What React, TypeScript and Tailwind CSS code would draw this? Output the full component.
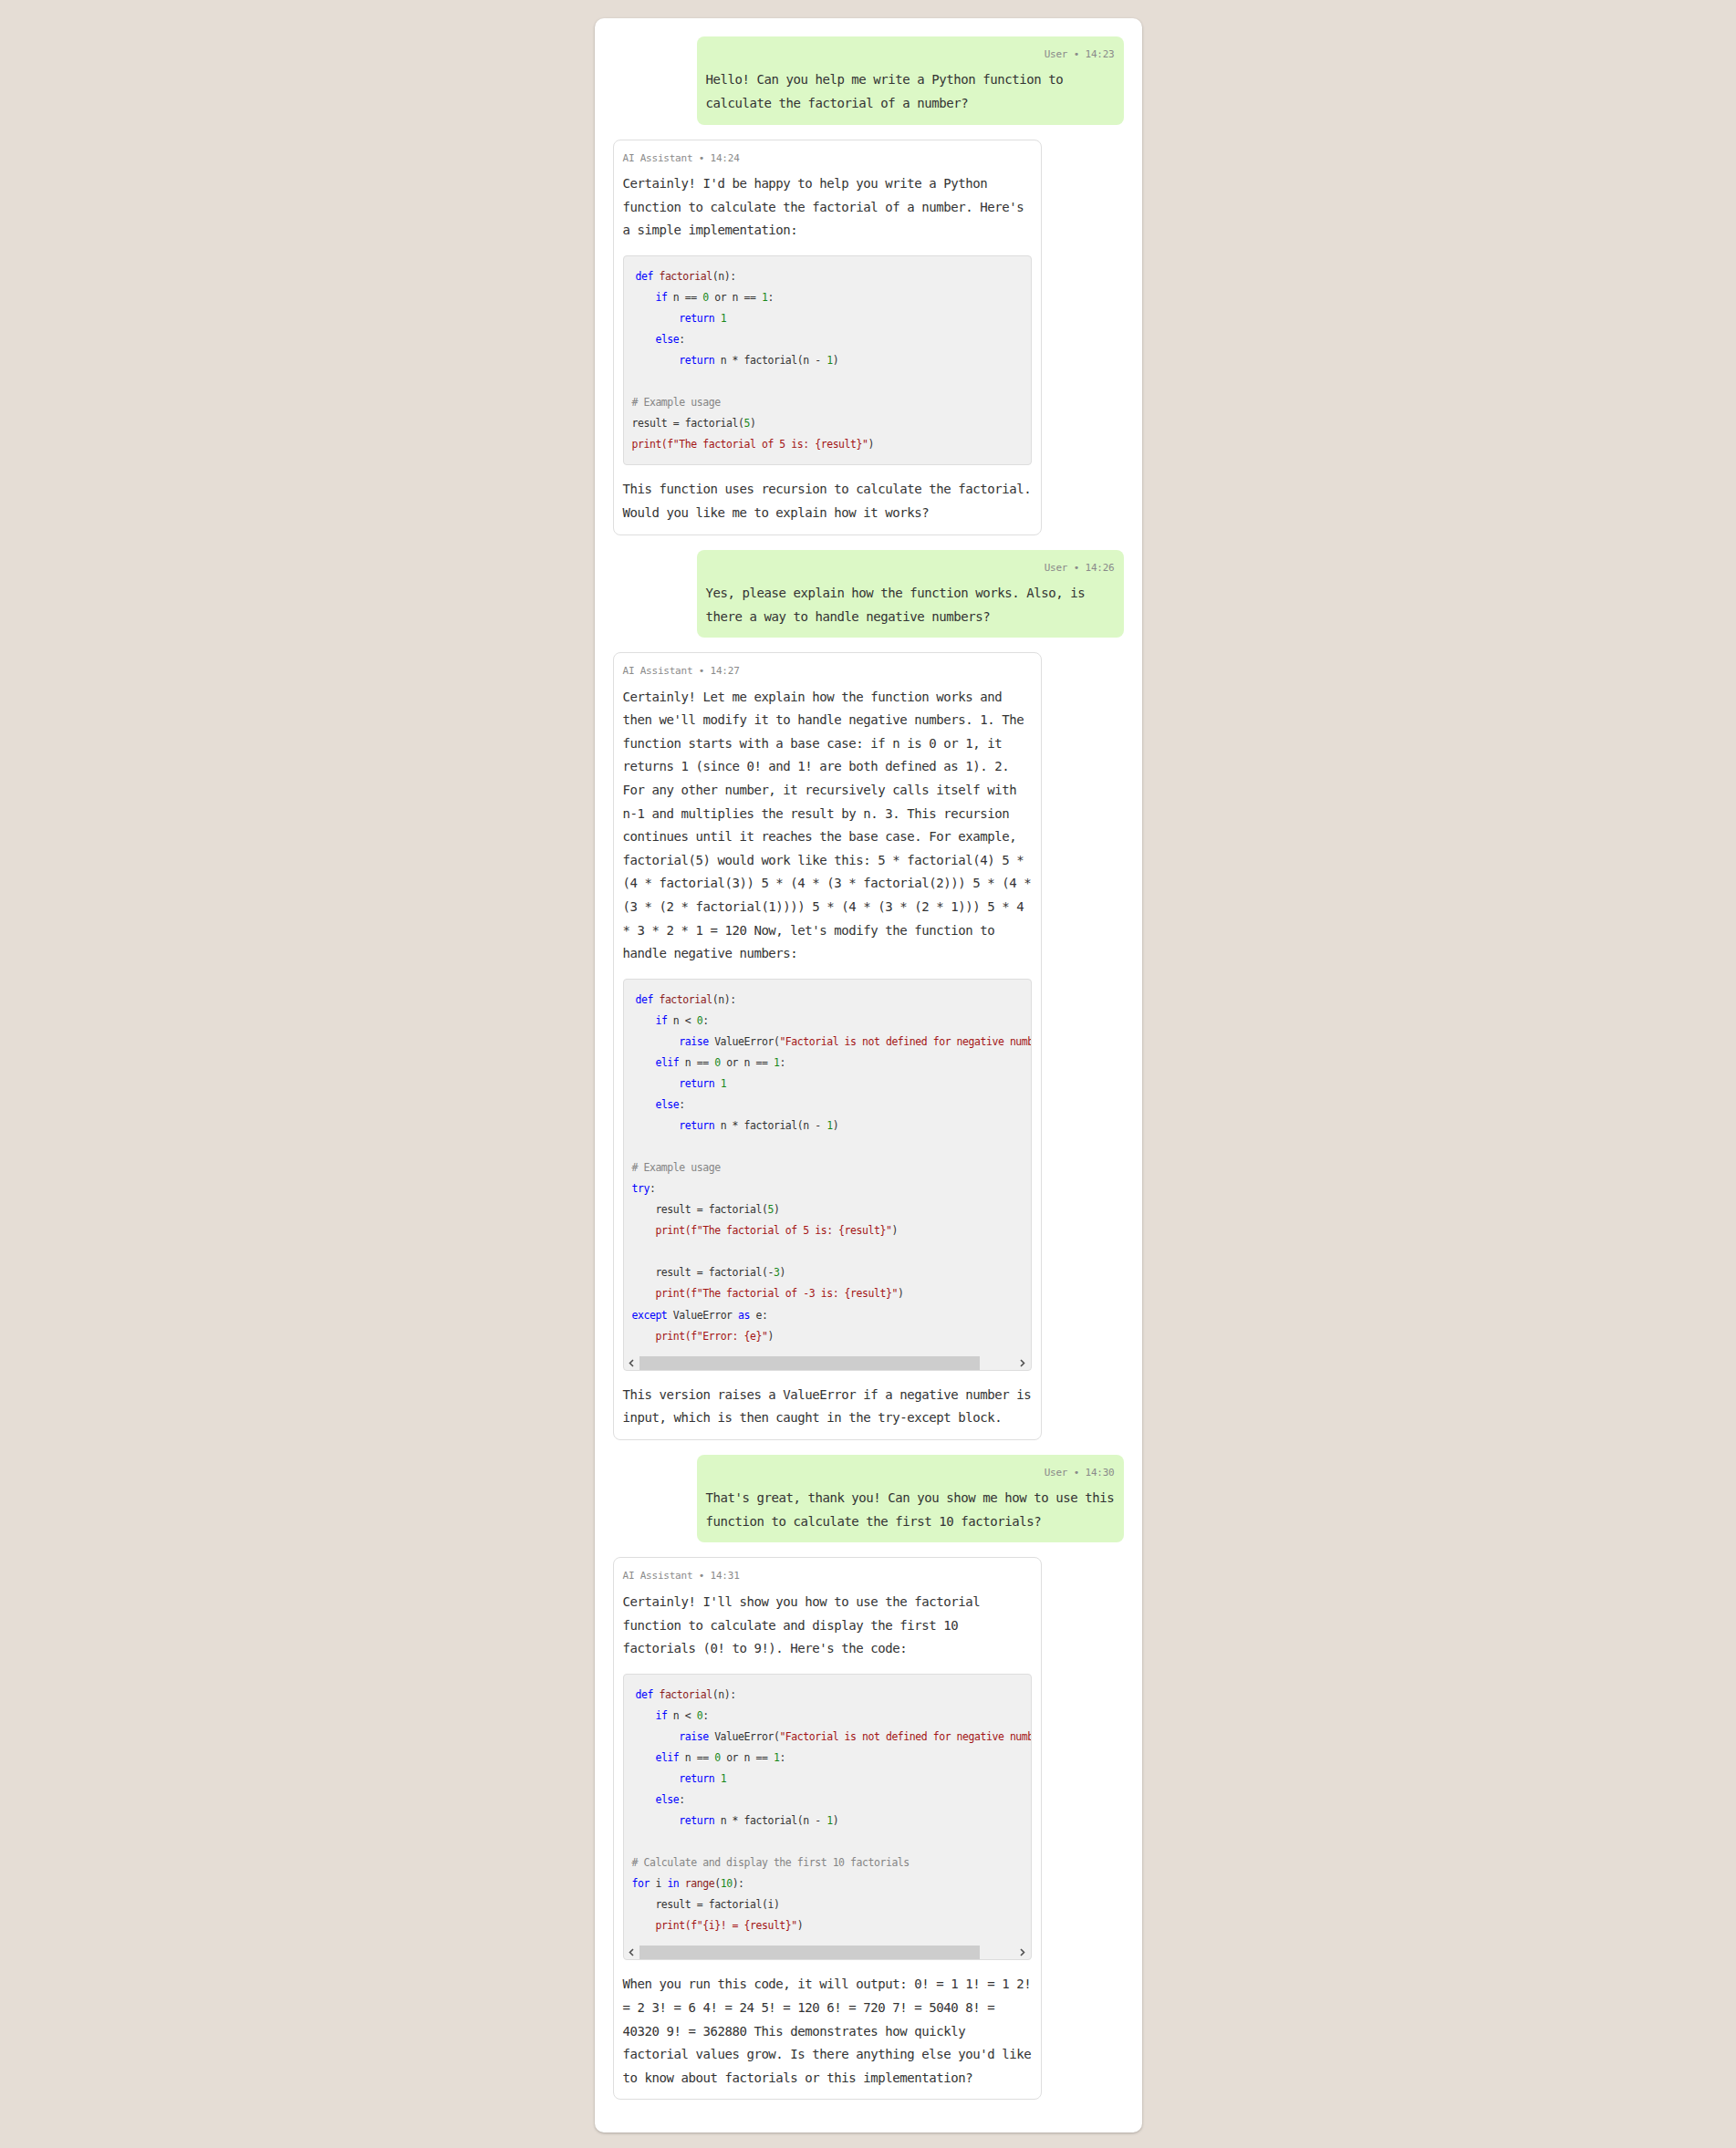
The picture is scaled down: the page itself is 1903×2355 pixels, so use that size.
import React from 'react';

type Tok = [string, string?];
type Line = Tok[];

// token colours
const K = 'text-[#0000ff]';
const F = 'text-[#8b1c1c]';
const S = 'text-[#a31515]';
const N = 'text-[#1a881a]';
const C = 'text-[#858585]';

const factorialHead: Line[] = [
  [['def', K], [' '], ['factorial', F], ['(n):']],
  [['    '], ['if', K], [' n < '], ['0', N], [':']],
  [['        '], ['raise', K], [' ValueError('], ['"Factorial is not defined for negative numbers"', S], [')']],
  [['    '], ['elif', K], [' n == '], ['0', N], [' or n == '], ['1', N], [':']],
  [['        '], ['return', K], [' '], ['1', N]],
  [['    '], ['else', K], [':']],
  [['        '], ['return', K], [' n * factorial(n - '], ['1', N], [')']],
  [],
];

const code1: Line[] = [
  [['def', K], [' '], ['factorial', F], ['(n):']],
  [['    '], ['if', K], [' n == '], ['0', N], [' or n == '], ['1', N], [':']],
  [['        '], ['return', K], [' '], ['1', N]],
  [['    '], ['else', K], [':']],
  [['        '], ['return', K], [' n * factorial(n - '], ['1', N], [')']],
  [],
  [['# Example usage', C]],
  [['result = factorial('], ['5', N], [')']],
  [['print(f"The factorial of 5 is: {result}"', S], [')']],
];

const code2: Line[] = [
  ...factorialHead,
  [['# Example usage', C]],
  [['try', K], [':']],
  [['    result = factorial('], ['5', N], [')']],
  [['    '], ['print(f"The factorial of 5 is: {result}"', S], [')']],
  [],
  [['    result = factorial(-'], ['3', N], [')']],
  [['    '], ['print(f"The factorial of -3 is: {result}"', S], [')']],
  [['except', K], [' ValueError '], ['as', K], [' e:']],
  [['    '], ['print(f"Error: {e}"', S], [')']],
];

const code3: Line[] = [
  ...factorialHead,
  [['# Calculate and display the first 10 factorials', C]],
  [['for', K], [' i '], ['in', K], [' '], ['range', F], ['('], ['10', N], ['):']],
  [['    result = factorial(i)']],
  [['    '], ['print(f"{i}! = {result}"', S], [')']],
];

function Arrow({ dir }: { dir: 'left' | 'right' }) {
  return (
    <div className="flex h-full w-[17px] items-center justify-center">
      <svg width="6" height="9" viewBox="0 0 6 9">
        <polyline
          points={dir === 'left' ? '5,1 1.5,4.5 5,8' : '1,1 4.5,4.5 1,8'}
          fill="none"
          stroke="#505050"
          strokeWidth="1.6"
        />
      </svg>
    </div>
  );
}

function CodeBlock({ lines, scroll }: { lines: Line[]; scroll?: boolean }) {
  return (
    <div className="my-[14px] overflow-hidden rounded-[4px] border border-[#dddddd] bg-[#f0f0f0]">
      <pre className="overflow-hidden pt-[11px] pb-[10px] pl-[9px] pr-[10px] font-['DejaVu_Sans_Mono',monospace] text-[11.5px] leading-[23.04px] tracking-[-0.449px] text-[#333333]">
        {lines.map((line, i) => (
          <div key={i} className={i === 0 ? 'pl-[4px]' : ''}>
            {line.length
              ? line.map(([t, c], j) => (
                  <span key={j} className={c}>
                    {t}
                  </span>
                ))
              : '\u00a0'}
          </div>
        ))}
      </pre>
      {scroll && (
        <div className="flex h-[15px] items-stretch">
          <Arrow dir="left" />
          <div className="flex-1">
            <div className="h-full w-[373px] bg-[#cdcdcd]" />
          </div>
          <Arrow dir="right" />
        </div>
      )}
    </div>
  );
}

function Meta({ children, right }: { children: React.ReactNode; right?: boolean }) {
  return (
    <div
      className={`mb-[5px] text-[11px] leading-[20.48px] tracking-[-0.22px] text-[#8a8a8a] ${right ? 'text-right' : ''}`}
    >
      {children}
    </div>
  );
}

function Text({ children }: { children: React.ReactNode }) {
  return <div className="text-[14px] leading-[25.6px] tracking-[-0.435px] text-[#333333]">{children}</div>;
}

function UserMessage({ time, text }: { time: string; text: string }) {
  return (
    <div className="ml-auto w-[468px] rounded-[8px] bg-[#dcf8c6] p-[10px]">
      <Meta right>User • {time}</Meta>
      <Text>{text}</Text>
    </div>
  );
}

function AssistantMessage({
  time,
  before,
  code,
  after,
  scroll,
}: {
  time: string;
  before: string;
  code: Line[];
  after: string;
  scroll?: boolean;
}) {
  return (
    <div className="w-[470px] rounded-[8px] border border-[#dedede] bg-white p-[10px]">
      <Meta>AI Assistant • {time}</Meta>
      <Text>{before}</Text>
      <CodeBlock lines={code} scroll={scroll} />
      <Text>{after}</Text>
    </div>
  );
}

export default function App() {
  return (
    <div className="min-h-screen bg-[#e5ddd5] py-[20px] font-['DejaVu_Sans_Mono',monospace]">
      <div className="mx-auto flex w-[600px] flex-col gap-[16px] rounded-[10px] bg-white px-[20px] pt-[20px] pb-[36px] shadow-[0_1px_3px_rgba(0,0,0,0.25)]">
        <UserMessage
          time="14:23"
          text="Hello! Can you help me write a Python function to calculate the factorial of a number?"
        />
        <AssistantMessage
          time="14:24"
          before="Certainly! I'd be happy to help you write a Python function to calculate the factorial of a number. Here's a simple implementation:"
          code={code1}
          after="This function uses recursion to calculate the factorial. Would you like me to explain how it works?"
        />
        <UserMessage
          time="14:26"
          text="Yes, please explain how the function works. Also, is there a way to handle negative numbers?"
        />
        <AssistantMessage
          time="14:27"
          before="Certainly! Let me explain how the function works and then we'll modify it to handle negative numbers. 1. The function starts with a base case: if n is 0 or 1, it returns 1 (since 0! and 1! are both defined as 1). 2. For any other number, it recursively calls itself with n-1 and multiplies the result by n. 3. This recursion continues until it reaches the base case. For example, factorial(5) would work like this: 5 * factorial(4) 5 * (4 * factorial(3)) 5 * (4 * (3 * factorial(2))) 5 * (4 * (3 * (2 * factorial(1)))) 5 * (4 * (3 * (2 * 1))) 5 * 4 * 3 * 2 * 1 = 120 Now, let's modify the function to handle negative numbers:"
          code={code2}
          scroll
          after="This version raises a ValueError if a negative number is input, which is then caught in the try-except block."
        />
        <UserMessage
          time="14:30"
          text="That's great, thank you! Can you show me how to use this function to calculate the first 10 factorials?"
        />
        <AssistantMessage
          time="14:31"
          before="Certainly! I'll show you how to use the factorial function to calculate and display the first 10 factorials (0! to 9!). Here's the code:"
          code={code3}
          scroll
          after="When you run this code, it will output: 0! = 1 1! = 1 2! = 2 3! = 6 4! = 24 5! = 120 6! = 720 7! = 5040 8! = 40320 9! = 362880 This demonstrates how quickly factorial values grow. Is there anything else you'd like to know about factorials or this implementation?"
        />
      </div>
    </div>
  );
}
